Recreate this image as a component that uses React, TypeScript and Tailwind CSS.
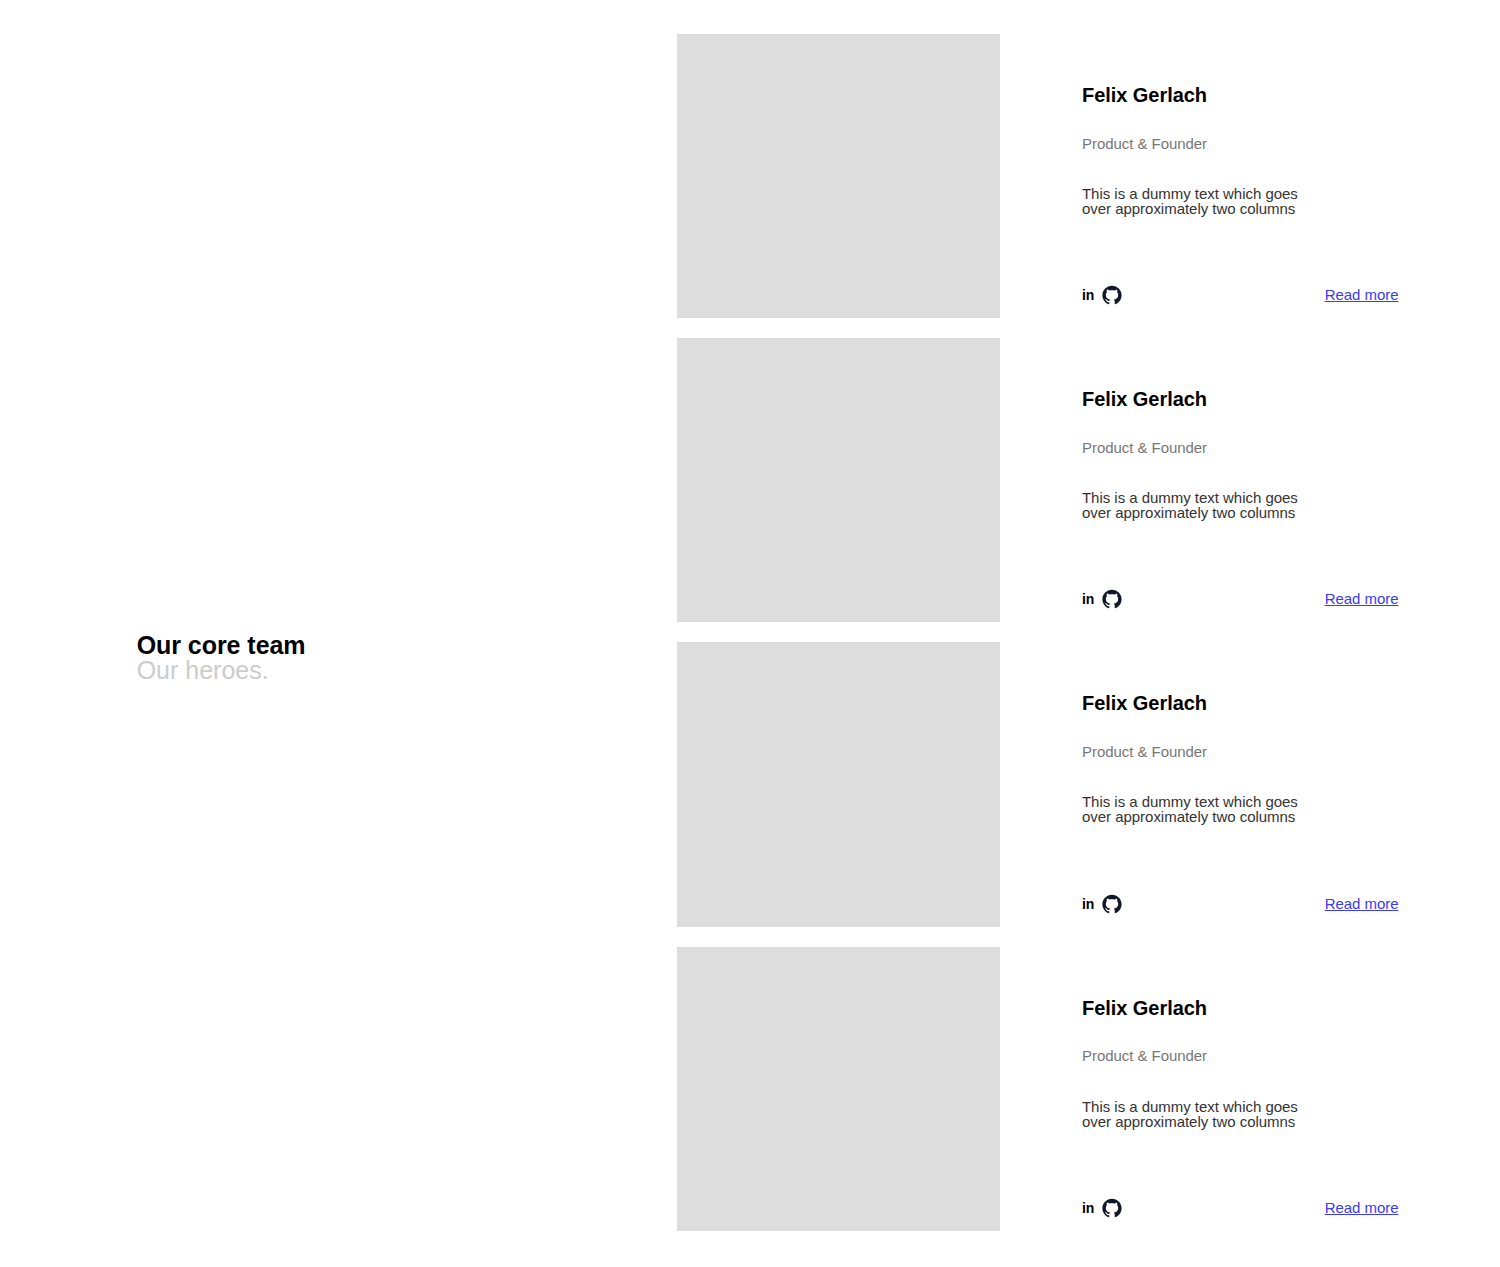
import React from "react";
import { AiOutlineGithub } from "react-icons/ai";

function Card() {
  return (
    <div className="flex gap-[82px] h-[284.2px]">
      <div className="w-[323.33px] shrink-0 bg-[#dddddd]" />
      <div className="flex flex-col w-[316.5px] pt-[49px] pb-[12px]">
        <h3 className="text-[20px] leading-[24px] font-bold text-black tracking-[-0.05px]">Felix Gerlach</h3>
        <p className="mt-[26.5px] text-[15px] leading-[20px] text-[#777777] tracking-[-0.05px]">Product &amp; Founder</p>
        <p className="mt-[32.5px] w-[230px] text-[15px] leading-[15px] text-[#333333] tracking-[-0.03px]">
          This is a dummy text which goes over approximately two columns
        </p>
        <div className="mt-auto flex items-center justify-between">
          <div className="flex items-center gap-[7px]">
            <span className="text-[14px] font-bold text-black leading-[22px]">in</span>
            <AiOutlineGithub className="w-[22px] h-[22px] text-[#111827]" />
          </div>
          <a href="#" className="text-[15px] leading-[20px] text-[#3b3bf0] underline tracking-[-0.05px]">Read more</a>
        </div>
      </div>
    </div>
  );
}

export default function App() {
  return (
    <div className="flex min-h-[1267px] bg-white pt-[34px] pb-[36px] font-['Liberation_Sans',Arial,sans-serif]">
      <div className="w-[676.67px] shrink-0 flex flex-col justify-center pl-[136.67px] pt-[51px]">
        <h2 className="text-[25px] leading-[25px] font-bold text-black tracking-[-0.05px]">Our core team</h2>
        <p className="text-[25px] leading-[25px] text-[#cccccc]">Our heroes.</p>
      </div>
      <div className="flex flex-col gap-[20px]">
        <Card />
        <Card />
        <Card />
        <Card />
      </div>
    </div>
  );
}
